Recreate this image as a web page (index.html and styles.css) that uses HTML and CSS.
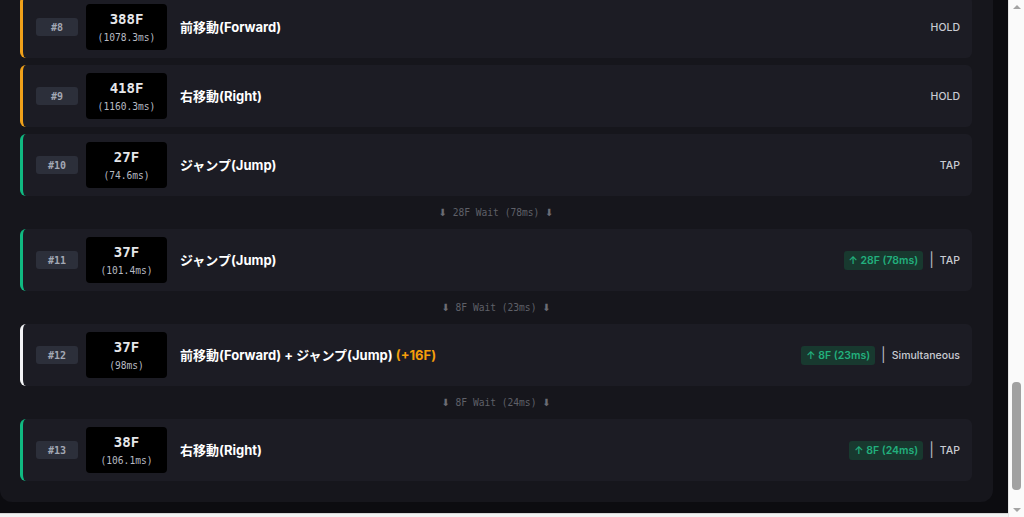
FILE: index.html
```html
<!DOCTYPE html>
<html lang="ja">
<head>
<meta charset="utf-8">
<title>Input Timeline</title>
<link rel="stylesheet" href="styles.css">
</head>
<body>
<div class="screen">
  <div class="viewport">
    <div class="page">
      <div class="panel">
        <div class="list">
          <div class="row row-hold">
            <span class="idx">#8</span>
            <div class="frames"><span class="f">388F</span><span class="ms">(1078.3ms)</span></div>
            <span class="label">前移動(Forward)</span>
            <div class="meta"><span class="kind">HOLD</span></div>
          </div>
          <div class="row row-hold">
            <span class="idx">#9</span>
            <div class="frames"><span class="f">418F</span><span class="ms">(1160.3ms)</span></div>
            <span class="label">右移動(Right)</span>
            <div class="meta"><span class="kind">HOLD</span></div>
          </div>
          <div class="row row-tap">
            <span class="idx">#10</span>
            <div class="frames"><span class="f">27F</span><span class="ms">(74.6ms)</span></div>
            <span class="label">ジャンプ(Jump)</span>
            <div class="meta"><span class="kind">TAP</span></div>
          </div>
          <div class="wait"><span class="arr">⬇</span> 28F Wait (78ms) <span class="arr">⬇</span></div>
          <div class="row row-tap">
            <span class="idx">#11</span>
            <div class="frames"><span class="f">37F</span><span class="ms">(101.4ms)</span></div>
            <span class="label">ジャンプ(Jump)</span>
            <div class="meta"><span class="gap">↑ 28F (78ms)</span><span class="sep">|</span><span class="kind">TAP</span></div>
          </div>
          <div class="wait"><span class="arr">⬇</span> 8F Wait (23ms) <span class="arr">⬇</span></div>
          <div class="row row-sim">
            <span class="idx">#12</span>
            <div class="frames"><span class="f">37F</span><span class="ms">(98ms)</span></div>
            <span class="label">前移動(Forward) + ジャンプ(Jump) <span class="plus">(+16F)</span></span>
            <div class="meta"><span class="gap">↑ 8F (23ms)</span><span class="sep">|</span><span class="kind">Simultaneous</span></div>
          </div>
          <div class="wait"><span class="arr">⬇</span> 8F Wait (24ms) <span class="arr">⬇</span></div>
          <div class="row row-tap">
            <span class="idx">#13</span>
            <div class="frames"><span class="f">38F</span><span class="ms">(106.1ms)</span></div>
            <span class="label">右移動(Right)</span>
            <div class="meta"><span class="gap">↑ 8F (24ms)</span><span class="sep">|</span><span class="kind">TAP</span></div>
          </div>
        </div>
      </div>
    </div>
    <div class="strip"></div>
  </div>
  <div class="scrollbar">
    <div class="sb-btn"><span class="tri-up"></span></div>
    <div class="sb-track"><div class="sb-thumb"></div></div>
    <div class="sb-btn"><span class="tri-down"></span></div>
  </div>
</div>
</body>
</html>
```
FILE: styles.css
```css
* { box-sizing: border-box; }
html, body { margin: 0; padding: 0; }
body {
  width: 1024px;
  height: 517px;
  overflow: hidden;
  background: #f4f4f4;
  font-family: "Inter", "Noto Sans CJK JP", sans-serif;
}
.screen {
  display: flex;
  height: 517px;
}
.viewport {
  flex: 1;
  display: flex;
  flex-direction: column;
  background: #0c0c10;
}
.page {
  flex: 1;
  overflow: hidden;
  padding-right: 15px;
}
.panel {
  background: #16161c;
  border-radius: 0 0 12px 12px;
  padding: 0 21px 21px 20px;
}
.list {
  display: flex;
  flex-direction: column;
  gap: 7px;
  margin-top: -4px;
}
.row {
  height: 62px;
  display: flex;
  align-items: center;
  background: #1c1c24;
  border-radius: 6px;
  border-left: 3px solid #f59e0b;
  padding: 0 12px 0 13px;
}
.row-hold { border-left-color: #f0a11a; }
.row-tap { border-left-color: #10b981; }
.row-sim { border-left-color: #f3f4f6; }
.idx {
  width: 42px;
  height: 18px;
  display: flex;
  align-items: center;
  justify-content: center;
  background: #2c2f3a;
  border-radius: 3px;
  color: #a3a8b4;
  font-family: "DejaVu Sans Mono", monospace;
  font-size: 10px;
  font-weight: bold;
  margin-right: 8px;
}
.frames {
  width: 81px;
  height: 46px;
  background: #000;
  border-radius: 4px;
  display: flex;
  flex-direction: column;
  align-items: center;
  justify-content: center;
  margin-right: 13px;
  font-family: "DejaVu Sans Mono", monospace;
}
.f {
  color: #e6e7ea;
  font-size: 14px;
  font-weight: bold;
  line-height: 18px;
}
.ms {
  color: #b7bac2;
  font-size: 9.6px;
  line-height: 14px;
  margin-top: 3px;
}
.label {
  color: #ffffff;
  font-size: 13px;
  font-weight: 700;
  margin-top: -2px;
}
.plus { color: #f59e0b; }
.meta {
  margin-left: auto;
  display: flex;
  align-items: center;
}
.kind {
  color: #c9cbd2;
  font-size: 10.5px;
  font-weight: 500;
}
.gap {
  height: 19px;
  display: flex;
  align-items: center;
  padding: 0 5px;
  background: #18392f;
  border-radius: 3px;
  color: #22b07d;
  font-size: 10.5px;
  font-weight: 600;
}
.sep {
  color: #b9bcc4;
  font-size: 14px;
  margin: 0 6px;
  line-height: 14px;
}
.wait {
  height: 19px;
  display: flex;
  align-items: center;
  justify-content: center;
  color: #5f6068;
  font-family: "DejaVu Sans Mono", monospace;
  font-size: 9.6px;
  white-space: pre;
}
.arr {
  font-family: "DejaVu Sans", sans-serif;
  font-size: 10px;
  color: #6b6c74;
}
.strip {
  height: 4px;
  background: #f2f2f2;
  border-top: 1px solid #d6d6d6;
}
.scrollbar {
  width: 16px;
  background: #fafafa;
  border-left: 1px solid #e6e6e6;
  display: flex;
  flex-direction: column;
}
.sb-btn {
  height: 14px;
  display: flex;
  align-items: center;
  justify-content: center;
}
.tri-up {
  width: 0; height: 0;
  border-left: 4px solid transparent;
  border-right: 4px solid transparent;
  border-bottom: 4px solid #a3a3a3;
}
.tri-down {
  width: 0; height: 0;
  border-left: 4px solid transparent;
  border-right: 4px solid transparent;
  border-top: 4px solid #a3a3a3;
}
.sb-track {
  flex: 1;
  padding: 368px 3px 0 3px;
}
.sb-thumb {
  height: 108px;
  background: #a1a1a1;
  border-radius: 4px;
}
```
